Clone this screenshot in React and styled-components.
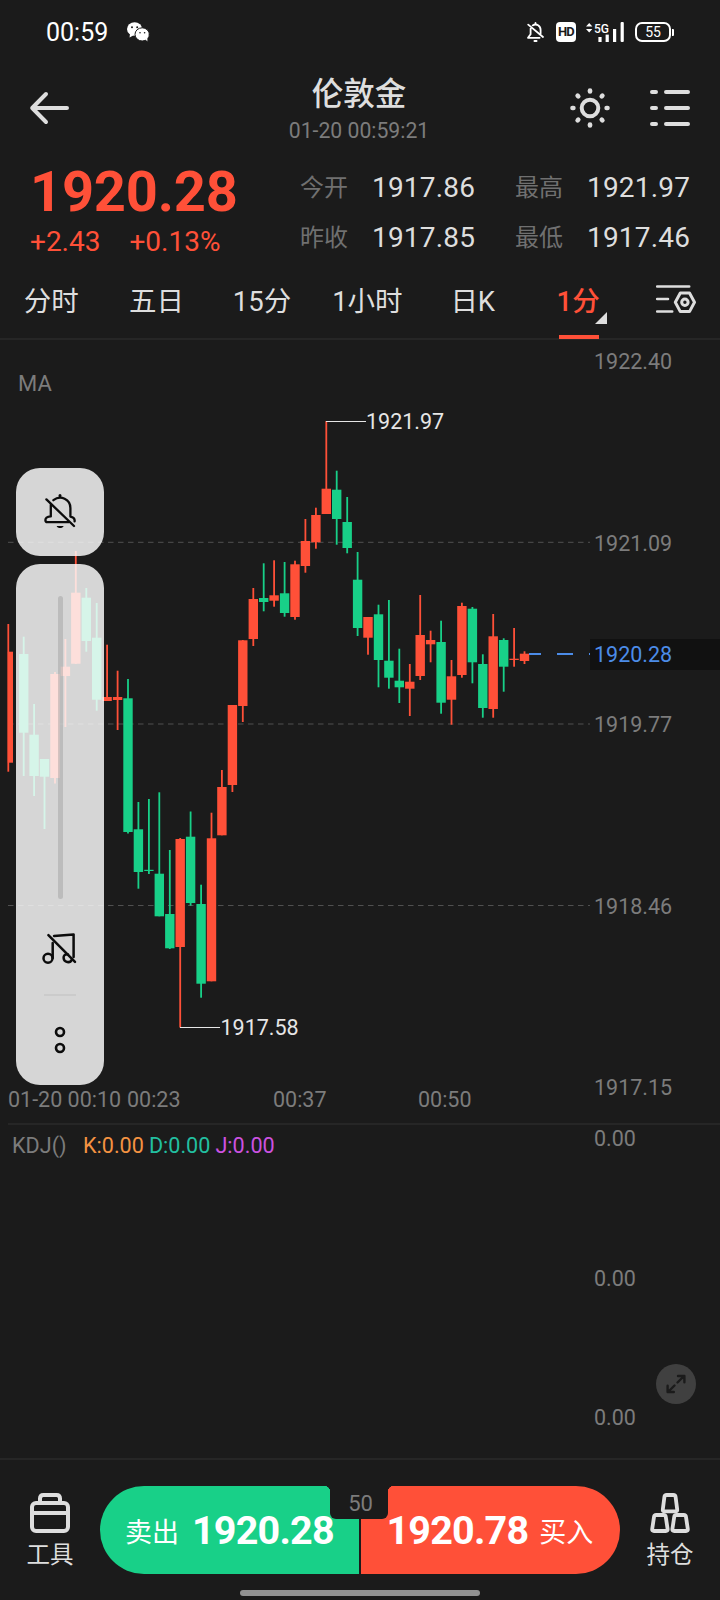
import React from 'react';
import styled, { createGlobalStyle, css } from 'styled-components';

const GlobalStyle = createGlobalStyle`
  * {
    box-sizing: border-box;
  }
  body {
    margin: 0;
    background: #1b1b1b;
    font-family: Roboto, "Noto Sans CJK SC", sans-serif;
    color: #dedede;
  }
`;

const UP = '#ff5038';
const DOWN = '#18d088';

// [x, high, low, bodyTop, bodyBottom, rising]
const candles = [
  [23.7, 636.7, 776, 654, 732.7, 0],
  [34.1, 704, 796, 734.7, 776, 0],
  [44.5, 759, 829, 759, 776.7, 0],
  [55, 672, 783.5, 674, 778, 1],
  [65.4, 639, 727, 666.7, 676, 1],
  [75.8, 551, 664, 592.7, 663.7, 1],
  [86.3, 588, 651.7, 597.7, 641, 0],
  [96.7, 603, 710.7, 637.7, 699.7, 0],
  [107.1, 644.7, 701, 697, 701, 1],
  [117.6, 670.7, 730, 697, 700, 1],
  [128, 679, 833.5, 698.3, 832, 0],
  [138.4, 802, 888.7, 829.3, 872, 0],
  [148.9, 799, 874, 869.8, 871, 0],
  [159.3, 792.3, 916.3, 873.7, 916.3, 0],
  [169.8, 850, 949, 914, 948.3, 0],
  [180.2, 838, 1027.5, 839, 947, 1],
  [190.6, 811.5, 905.7, 836.7, 903, 0],
  [201.1, 884.7, 997.7, 904, 983.7, 0],
  [211.5, 812.7, 981.3, 838.3, 981.3, 1],
  [221.9, 770, 835.3, 787, 835.3, 1],
  [232.4, 705, 792, 705, 785, 1],
  [242.8, 640, 722, 640.3, 706, 1],
  [253.3, 588, 646, 599, 639, 1],
  [263.7, 563.3, 611.3, 598, 602, 0],
  [274.1, 560.3, 606.7, 595.3, 600.7, 1],
  [284.6, 562, 616.7, 593.3, 613, 0],
  [295, 560.7, 619.7, 564.3, 617, 1],
  [305.4, 519, 572.7, 541, 566, 1],
  [315.9, 507.7, 548.7, 515, 542.3, 1],
  [326.3, 421, 514, 488.7, 514, 1],
  [336.7, 470.7, 544.7, 489.7, 519, 0],
  [347.2, 497, 553.3, 522, 548, 0],
  [357.6, 552, 636, 579.7, 628, 0],
  [368, 617, 654.7, 617, 637.7, 1],
  [378.5, 604.7, 687.3, 614.3, 660, 0],
  [388.9, 600, 688.7, 660.7, 677.7, 0],
  [399.3, 648.7, 703, 680.7, 687.3, 0],
  [409.8, 664, 716, 681.7, 688.7, 1],
  [420.2, 595, 680, 635, 676, 1],
  [430.6, 630.7, 662.3, 640, 644.3, 1],
  [441.1, 620.7, 713.7, 642, 702.7, 0],
  [451.5, 660, 724.7, 676.3, 699.7, 1],
  [461.9, 602.7, 677.7, 606, 675, 1],
  [472.4, 607, 683.3, 608.7, 662.3, 0],
  [482.8, 654.3, 717.7, 664, 708, 0],
  [493.2, 614, 717.7, 636.3, 709, 1],
  [503.7, 638.3, 691.7, 640, 666.7, 0],
  [514.1, 628, 666.7, 658.7, 660, 1],
  [524.5, 651.3, 664, 653.7, 661, 1],
];

const Screen = styled.div`
  width: 720px;
  height: 1600px;
  display: flex;
  flex-direction: column;
  overflow: hidden;
  background: #1b1b1b;
`;

const Icon = styled.svg`
  display: block;
  flex: none;
  overflow: visible;
  fill: none;
  stroke: currentColor;
  stroke-linecap: round;
  stroke-linejoin: round;
`;

/* status bar */

const StatusBar = styled.div`
  height: 64px;
  padding: 0 46px 0 46px;
  display: flex;
  align-items: center;
  color: #fff;
`;

const Clock = styled.span`
  font-size: 25px;
  width: 81px;
`;

const StatusIcons = styled.div`
  margin-left: auto;
  display: flex;
  align-items: center;
`;

const HdBadge = styled.span`
  width: 20px;
  height: 20px;
  margin: 0 10px 0 12px;
  border-radius: 4px;
  background: #fff;
  color: #1b1b1b;
  font: bold 13px/20px Roboto, sans-serif;
  letter-spacing: -0.7px;
  text-align: center;
`;

const Battery = styled.span`
  width: 36px;
  height: 20px;
  margin-left: 11px;
  border: 2px solid #fff;
  border-radius: 7px;
  font-size: 14px;
  line-height: 17px;
  text-align: center;
`;

const BatteryTip = styled.span`
  width: 2px;
  height: 7px;
  margin-left: 1px;
  background: #fff;
  border-radius: 0 1px 1px 0;
`;

/* header */

const Header = styled.header`
  height: 92px;
  padding: 0 30px 4px;
  display: grid;
  grid-template-columns: 200px 1fr 200px;
  align-items: center;
`;

const TitleBlock = styled.div`
  text-align: center;
  padding: 4px 2px 0 0;
`;

const Title = styled.h1`
  margin: 0 0 1px;
  font-size: 31.5px;
  line-height: 38px;
  font-weight: 500;
`;

const Subtitle = styled.div`
  font-size: 21.2px;
  line-height: 26px;
  color: #7c7c7c;
  margin-top: 4px;
`;

const HeaderActions = styled.div`
  display: flex;
  justify-content: flex-end;
  gap: 40px;
`;

/* quote */

const Quote = styled.section`
  height: 106px;
  display: flex;
  padding-left: 30px;
`;

const QuoteMain = styled.div`
  width: 270px;
  color: ${UP};
`;

const LastPrice = styled.div`
  font-size: 56px;
  font-weight: 700;
  line-height: 60px;
  margin-top: 6px;
  letter-spacing: -0.2px;
`;

const Change = styled.div`
  display: flex;
  gap: 29px;
  font-size: 28px;
  line-height: 32px;
  margin-top: 4px;
`;

const Stats = styled.dl`
  margin: 7px 0 0;
  display: grid;
  grid-template-columns: 72px 143px 72px 110px;
  grid-auto-rows: 50px;
  align-items: center;
  height: 100px;
`;

const StatName = styled.dt`
  font-size: 24px;
  line-height: 50px;
  color: #707070;
`;

const StatValue = styled.dd`
  margin: 0;
  font-size: 28px;
  line-height: 50px;
  letter-spacing: 0.2px;
`;

/* period tabs */

const Tabs = styled.nav`
  height: 78px;
  display: flex;
  border-bottom: 2px solid #262626;
`;

const Tab = styled.button`
  position: relative;
  width: 105.4px;
  height: 76px;
  padding: 0 3px 3px 0;
  border: 0;
  background: none;
  font: 400 27.5px Roboto, "Noto Sans CJK SC", sans-serif;
  color: #dedede;
  ${(p) =>
    p.$active &&
    css`
      color: ${UP};
      font-weight: 500;
      &::before {
        content: '';
        position: absolute;
        left: 32px;
        bottom: -1px;
        width: 40px;
        height: 4px;
        background: ${UP};
      }
      &::after {
        content: '';
        position: absolute;
        left: 68px;
        bottom: 14px;
        border-left: 12px solid transparent;
        border-bottom: 12px solid #dedede;
      }
    `}
`;

const TabSettings = styled.div`
  padding: 22px 0 0 24px;
`;

/* chart */

const ChartPanel = styled.section`
  position: relative;
  height: 783px;
  display: grid;
  grid-template-columns: 594px 1fr;
`;

const Plot = styled.div`
  display: flex;
  flex-direction: column;
  height: 783px;
`;

const Indicator = styled.div`
  height: 30px;
  margin: 29px 0 -59px 18px;
  font-size: 22px;
  line-height: 30px;
  color: #7c7c7c;
`;

const Candles = styled.svg`
  display: block;
  width: 594px;
  height: 741px;
  overflow: visible;
  font: 22px Roboto, sans-serif;
`;

const TimeAxis = styled.div`
  display: flex;
  padding-left: 8px;
  height: 38px;
  line-height: 37px;
  font-size: 21.5px;
  color: #7c7c7c;
  white-space: nowrap;
`;

const TimeLabel = styled.span`
  width: ${(p) => p.$width}px;
`;

const Axis = styled.div`
  display: flex;
  flex-direction: column;
  justify-content: space-between;
  margin-top: ${(p) => p.$top}px;
  height: ${(p) => p.$height}px;
  font-size: 21.5px;
  line-height: 26px;
  color: #7c7c7c;
`;

const PriceTag = styled.div`
  position: absolute;
  right: 0;
  top: 299px;
  width: 130px;
  height: 31px;
  padding-left: 4px;
  background: #111;
  color: #4c8ce8;
  font-size: 21.5px;
  line-height: 32px;
`;

/* floating volume control */

const VolumeControl = styled.aside`
  position: absolute;
  left: 16px;
  top: 128px;
  width: 88px;
  display: flex;
  flex-direction: column;
  gap: 8px;
  color: #0c0c0c;
`;

const Glass = styled.div`
  background: rgba(253, 253, 253, 0.83);
  border-radius: 24px;
  display: flex;
  flex-direction: column;
  align-items: center;
`;

const MuteButton = styled(Glass)`
  height: 88px;
  justify-content: center;
`;

const VolumePanel = styled(Glass)`
  height: 521px;
  padding-top: 32px;
`;

const Slider = styled.div`
  width: 5px;
  height: 303px;
  margin-bottom: 34px;
  border-radius: 3px;
  background: rgba(150, 150, 150, 0.4);
`;

const Separator = styled.div`
  width: 32px;
  height: 2px;
  margin: 30px 0 30px;
  background: #cbcbcb;
`;

/* kdj */

const KdjPanel = styled.section`
  position: relative;
  height: 335px;
  margin-left: 8px;
  border-top: 2px solid #262626;
  display: grid;
  grid-template-columns: 586px 1fr;
`;

const KdjLegend = styled.div`
  display: flex;
  gap: 5px;
  padding: 8px 0 0 4px;
  font-size: 21.6px;
  line-height: 26px;
`;

const LegendItem = styled.span`
  color: ${(p) => p.$color};
  &:first-child {
    width: 66px;
  }
`;

const ExpandButton = styled.button`
  position: absolute;
  right: 24px;
  top: 239px;
  width: 40px;
  height: 40px;
  padding: 0;
  border: 0;
  border-radius: 50%;
  background: #404040;
  color: #1b1b1b;
  display: grid;
  place-items: center;
`;

/* trade bar */

const TradeBar = styled.footer`
  height: 132px;
  border-top: 2px solid #262626;
  display: flex;
`;

const TradeTool = styled.div`
  width: 100px;
  padding-top: 33px;
  display: flex;
  flex-direction: column;
  align-items: center;
  font-size: 23.5px;
  line-height: 28px;
  gap: 8px;
`;

const TradeButtons = styled.div`
  position: relative;
  display: flex;
  gap: 2px;
  width: 520px;
  height: 88px;
  margin-top: 26px;
  color: #fff;
`;

const TradeButton = styled.button`
  flex: 1;
  display: flex;
  align-items: center;
  gap: ${(p) => (p.$sell ? 13 : 11)}px;
  padding: ${(p) => (p.$sell ? '1px 0 0 25px' : '1px 0 0 26px')};
  border: 0;
  border-radius: ${(p) => (p.$sell ? '44px 0 0 44px' : '0 44px 44px 0')};
  background: ${(p) => (p.$sell ? DOWN : UP)};
  color: inherit;
  font: 27px "Noto Sans CJK SC", sans-serif;
  white-space: nowrap;
`;

const TradePrice = styled.b`
  position: relative;
  z-index: 1;
  font: 700 39.5px Roboto, sans-serif;
  letter-spacing: -0.8px;
`;

const Spread = styled.div`
  position: absolute;
  left: 230px;
  top: 0;
  width: 58px;
  height: 33px;
  border-radius: 0 0 6px 6px;
  background: #1b1b1b;
  color: #7c7c7c;
  font-size: 22px;
  line-height: 36px;
  text-align: center;
  padding-left: 3px;
  &::before,
  &::after {
    content: '';
    position: absolute;
    top: 0;
    width: 6px;
    height: 6px;
  }
  &::before {
    left: -6px;
    background: radial-gradient(circle at 0 100%, transparent 6px, #1b1b1b 6.5px);
  }
  &::after {
    right: -6px;
    background: radial-gradient(circle at 100% 100%, transparent 6px, #1b1b1b 6.5px);
  }
`;

const HomeIndicator = styled.div`
  width: 240px;
  height: 6px;
  margin: 0 auto;
  border-radius: 3px;
  background: #929292;
`;

const WeChatIcon = () => (
  <Icon width="22" height="20" viewBox="0 0 22 20">
    <g fill="#fff" stroke="none">
      <ellipse cx="7.6" cy="7" rx="7.6" ry="6.8" />
      <path d="M3 11 2.6 15.6 7 13z" />
      <ellipse cx="15.2" cy="12.4" rx="7.2" ry="6.6" stroke="#1b1b1b" strokeWidth="1" />
      <path d="M18 17 20.4 19.6 20.4 15z" />
    </g>
    <g fill="#1b1b1b" stroke="none">
      <circle cx="5" cy="5.2" r="1" />
      <circle cx="10.2" cy="5.2" r="1" />
      <circle cx="13" cy="10.8" r=".8" />
      <circle cx="17.6" cy="10.8" r=".8" />
    </g>
  </Icon>
);

const SilentIcon = () => (
  <Icon width="17" height="20" viewBox="0 0 17 20" strokeWidth="1.8">
    <path d="M5.6 3.4C9.6 1 13.6 4 13.6 8v3.4" />
    <path d="M3.6 6.6v5.6L1 15.8h11.6M1.2 2.6 16 15" />
    <path d="M7.4 19h2.2M8.5 1v1" />
  </Icon>
);

const SignalIcon = () => (
  <Icon width="38" height="20" viewBox="0 0 38 20" stroke="none">
    <g fill="#fff" stroke="none">
      <path d="M0 4.4 3.2 1 6.4 4.4zM0 7 3.2 10.4 6.4 7z" />
      <rect x="12.4" y="15" width="3.2" height="5" />
      <rect x="19.6" y="12.6" width="3.2" height="7.4" />
      <rect x="27" y="7" width="3.2" height="13" />
      <rect x="34.6" y="0" width="3.2" height="20" rx="1" />
      <text x="8" y="10.8" fontSize="12" fontWeight="500" fontFamily="Roboto">5G</text>
    </g>
  </Icon>
);

const BackIcon = () => (
  <Icon width="40" height="34" viewBox="0 0 40 34" strokeWidth="4">
    <path d="M37 17H2.2M16 3 2.2 17 16 31" />
  </Icon>
);

const rays = [0, 45, 90, 135, 180, 225, 270, 315];

const SunIcon = () => (
  <Icon width="40" height="40" viewBox="0 0 40 40" strokeWidth="4">
    <circle cx="20" cy="20" r="8.3" />
    {rays.map((a) => (
      <path key={a} strokeWidth="4.6" d="M20 2.5v.9" transform={`rotate(${a} 20 20)`} />
    ))}
  </Icon>
);

const ListIcon = () => (
  <Icon width="40" height="40" viewBox="0 0 40 40" strokeWidth="4">
    <path d="M2 4h4M16 4h22M2 20h4M16 20h22M2 36h4M16 36h22" />
  </Icon>
);

const ChartSettingsIcon = () => (
  <Icon width="40" height="30" viewBox="0 0 40 30" strokeWidth="2.6">
    <path d="M1.2 2.5h32M1.2 15H12M1.2 27.5h15" />
    <path d="M24.3 9h9.2l5 9.3-5 9.3h-9.2l-5-9.3z" strokeWidth="3" />
    <circle cx="28.9" cy="18.3" r="3.2" strokeWidth="3" />
  </Icon>
);

const MuteBellIcon = () => (
  <Icon width="32" height="36" viewBox="0 0 32 36" strokeWidth="2.3">
    <path d="M9.4 6.2C16.6.4 26.4 5.4 26.4 14v8.6c3.4.6 4.6 2 4.2 4.8" />
    <path d="M6.8 11v11.4c-3.6.4-5.4 1.4-5.4 3.6 0 1.6.6 2.2 2 2.2h21.4" />
    <path d="M2.4 5.4 30 32" />
    <path d="M16 2V1.4" strokeWidth="3" />
    <path d="M12.6 32h7c-1 2.8-6 2.8-7 0z" fill="currentColor" stroke="none" />
  </Icon>
);

const MuteMusicIcon = () => (
  <Icon width="36" height="31" viewBox="0 0 36 31" strokeWidth="2.5">
    <circle cx="6" cy="25.2" r="4.5" />
    <path d="M10.7 25V10M12 3 31.6 1.4V24" />
    <path d="M26 21.4c-3-.6-4.6 1.4-4.4 3.6.4 4.6 6.6 5.4 8 2" />
    <path d="M6.4 2.2 33 28.8" />
  </Icon>
);

const MoreIcon = () => (
  <Icon width="12" height="28" viewBox="0 0 12 28" strokeWidth="2.6">
    <circle cx="6" cy="6" r="4" />
    <circle cx="6" cy="22" r="4" />
  </Icon>
);

const ExpandIcon = () => (
  <Icon width="20" height="20" viewBox="0 0 20 20" strokeWidth="2.4" strokeLinecap="butt" strokeLinejoin="miter">
    <path d="M11.5 8.5 18 2M12 2h6.4v6.2M8.5 11.5 2 18M1.6 11.8V18h6.2" />
  </Icon>
);

const ToolboxIcon = () => (
  <Icon width="40" height="40" viewBox="0 0 40 40" strokeWidth="4">
    <rect x="2" y="10" width="36" height="28" rx="4" />
    <path d="M2 20h36M10 10V5.6C10 3.4 11.4 2 13.4 2h13.2C28.6 2 30 3.4 30 5.6V10" />
  </Icon>
);

const PositionIcon = () => (
  <Icon width="40" height="40" viewBox="0 0 40 40" strokeWidth="3.8">
    <path d="M16.6 2h6.8c1.4 0 2 .6 2.2 2l1.6 12.4c.2 1.4-.4 2-1.8 2H14.6c-1.4 0-2-.6-1.8-2L14.4 4c.2-1.4.8-2 2.2-2z" />
    <path d="M6.2 22h7.4c1.4 0 2 .6 2.2 2l1.8 12c.2 1.4-.4 2-1.8 2H4c-1.4 0-2-.6-1.8-2L4 24c.2-1.4.8-2 2.2-2z" />
    <path d="M26.4 22h7.4c1.4 0 2 .6 2.2 2l1.8 12c.2 1.4-.4 2-1.8 2H24.2c-1.4 0-2-.6-1.8-2l1.8-12c.2-1.4.8-2 2.2-2z" />
  </Icon>
);

const CandleChart = () => (
  <Candles viewBox="0 340 594 741">
    {[542.3, 724, 905.5].map((y) => (
      <path key={y} d={`M8 ${y}H590`} stroke="#505050" strokeDasharray="5.5 4.5" />
    ))}
    <path d="M8.3 624V771.7" stroke={UP} strokeWidth="1.8" />
    <rect x="7.8" y="651.7" width="5.2" height="111" fill={UP} />
    {candles.map(([x, high, low, top, bottom, rising]) => {
      const color = rising ? UP : DOWN;
      return (
        <g key={x} fill={color}>
          <rect x={x - 0.9} y={high} width="1.8" height={low - high} />
          <rect x={x - 4.7} y={top} width="9.4" height={bottom - top} />
        </g>
      );
    })}
    <path d="M529 654H541M557 654H573M589 654H590" stroke="#4c8ce8" strokeWidth="2" />
    <path d="M326 421.5H366M180 1027.5H220" stroke="#e6e6e6" />
    <text x="366" y="429" fill="#e6e6e6" fontSize="21.5">1921.97</text>
    <text x="220.5" y="1035" fill="#e6e6e6" fontSize="21.5">1917.58</text>
  </Candles>
);

const tabs = ['分时', '五日', '15分', '1小时', '日K', '1分'];
const prices = ['1922.40', '1921.09', '1919.77', '1918.46', '1917.15'];

export default function App() {
  return (
    <Screen>
      <GlobalStyle />
      <StatusBar>
        <Clock>00:59</Clock>
        <WeChatIcon />
        <StatusIcons>
          <SilentIcon />
          <HdBadge>HD</HdBadge>
          <SignalIcon />
          <Battery>55</Battery>
          <BatteryTip />
        </StatusIcons>
      </StatusBar>

      <Header>
        <BackIcon />
        <TitleBlock>
          <Title>伦敦金</Title>
          <Subtitle>01-20 00:59:21</Subtitle>
        </TitleBlock>
        <HeaderActions>
          <SunIcon />
          <ListIcon />
        </HeaderActions>
      </Header>

      <Quote>
        <QuoteMain>
          <LastPrice>1920.28</LastPrice>
          <Change>
            <span>+2.43</span>
            <span>+0.13%</span>
          </Change>
        </QuoteMain>
        <Stats>
          <StatName>今开</StatName>
          <StatValue>1917.86</StatValue>
          <StatName>最高</StatName>
          <StatValue>1921.97</StatValue>
          <StatName>昨收</StatName>
          <StatValue>1917.85</StatValue>
          <StatName>最低</StatName>
          <StatValue>1917.46</StatValue>
        </Stats>
      </Quote>

      <Tabs>
        {tabs.map((t) => (
          <Tab key={t} $active={t === '1分'}>{t}</Tab>
        ))}
        <TabSettings>
          <ChartSettingsIcon />
        </TabSettings>
      </Tabs>

      <ChartPanel>
        <Plot>
          <Indicator>MA</Indicator>
          <CandleChart />
          <TimeAxis>
            <TimeLabel $width={119}>01-20 00:10</TimeLabel>
            <TimeLabel $width={146}>00:23</TimeLabel>
            <TimeLabel $width={145}>00:37</TimeLabel>
            <TimeLabel $width={60}>00:50</TimeLabel>
          </TimeAxis>
        </Plot>
        <Axis $top={9} $height={752}>
          {prices.map((p) => (
            <span key={p}>{p}</span>
          ))}
        </Axis>
        <PriceTag>1920.28</PriceTag>
        <VolumeControl>
          <MuteButton>
            <MuteBellIcon />
          </MuteButton>
          <VolumePanel>
            <Slider />
            <MuteMusicIcon />
            <Separator />
            <MoreIcon />
          </VolumePanel>
        </VolumeControl>
      </ChartPanel>

      <KdjPanel>
        <KdjLegend>
          <LegendItem $color="#7c7c7c">KDJ()</LegendItem>
          <LegendItem $color="#f59342">K:0.00</LegendItem>
          <LegendItem $color="#22bfa0">D:0.00</LegendItem>
          <LegendItem $color="#cc52e0">J:0.00</LegendItem>
        </KdjLegend>
        <Axis $top={1} $height={305}>
          <span>0.00</span>
          <span>0.00</span>
          <span>0.00</span>
        </Axis>
        <ExpandButton>
          <ExpandIcon />
        </ExpandButton>
      </KdjPanel>

      <TradeBar>
        <TradeTool>
          <ToolboxIcon />
          工具
        </TradeTool>
        <TradeButtons>
          <TradeButton $sell>
            卖出<TradePrice>1920.28</TradePrice>
          </TradeButton>
          <TradeButton>
            <TradePrice>1920.78</TradePrice>买入
          </TradeButton>
          <Spread>50</Spread>
        </TradeButtons>
        <TradeTool>
          <PositionIcon />
          持仓
        </TradeTool>
      </TradeBar>
      <HomeIndicator />
    </Screen>
  );
}
